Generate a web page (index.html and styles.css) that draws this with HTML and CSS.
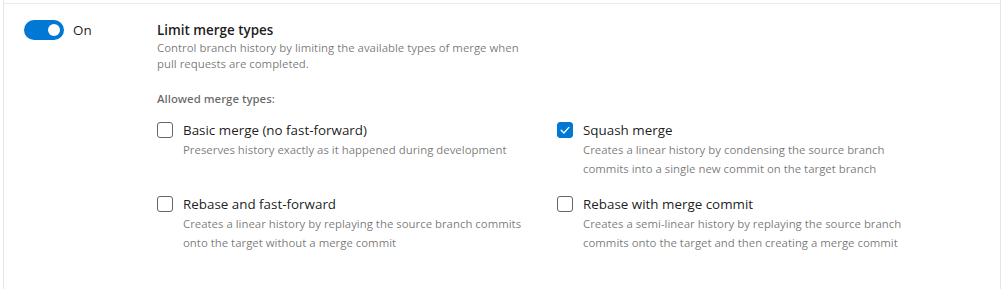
FILE: index.html
```html
<!DOCTYPE html>
<html lang="en">
<head>
<meta charset="utf-8">
<title>Limit merge types</title>
<link rel="stylesheet" href="styles.css">
</head>
<body>
<div class="page">
  <div class="setting">
    <div class="toggle-col">
      <span class="toggle" role="switch" aria-checked="true"><span class="knob"></span></span>
      <span class="toggle-label">On</span>
    </div>
    <div class="content">
      <div class="title">Limit merge types</div>
      <div class="desc">Control branch history by limiting the available types of merge when pull requests are completed.</div>
      <div class="allowed">Allowed merge types:</div>
      <div class="options">
        <div class="option">
          <span class="box"></span>
          <div class="option-text">
            <div class="option-label">Basic merge (no fast-forward)</div>
            <div class="option-desc">Preserves history exactly as it happened during development</div>
          </div>
        </div>
        <div class="option">
          <span class="box checked"><svg viewBox="0 0 16 16" width="16" height="16"><path d="M4.2 8.3 L6.9 11 L11.9 5.4" fill="none" stroke="#fff" stroke-width="1.3" stroke-linecap="round" stroke-linejoin="round"/></svg></span>
          <div class="option-text">
            <div class="option-label">Squash merge</div>
            <div class="option-desc">Creates a linear history by condensing the source branch commits into a single new commit on the target branch</div>
          </div>
        </div>
        <div class="option">
          <span class="box"></span>
          <div class="option-text">
            <div class="option-label">Rebase and fast-forward</div>
            <div class="option-desc">Creates a linear history by replaying the source branch commits onto the target without a merge commit</div>
          </div>
        </div>
        <div class="option">
          <span class="box"></span>
          <div class="option-text">
            <div class="option-label">Rebase with merge commit</div>
            <div class="option-desc">Creates a semi-linear history by replaying the source branch commits onto the target and then creating a merge commit</div>
          </div>
        </div>
      </div>
    </div>
  </div>
</div>
</body>
</html>
```
FILE: styles.css
```css
html, body {
  margin: 0;
  padding: 0;
  background: #fff;
}
body {
  font-family: "Open Sans", "Noto Sans", sans-serif;
  color: rgba(0, 0, 0, 0.9);
}
.page {
  margin-left: 3px;
  width: 998px;
  height: 289px;
  border-left: 1px solid #e6e6e6;
  border-right: 1px solid #e6e6e6;
  padding-top: 3px;
  box-sizing: border-box;
}
.setting {
  border-top: 1px solid #eaeaea;
  display: flex;
  padding: 16px 20px 0;
}
.toggle-col {
  width: 133px;
  flex: none;
  display: flex;
  align-items: center;
  gap: 9px;
  height: 20px;
}
.toggle {
  width: 40px;
  height: 20px;
  border-radius: 10px;
  background: #0078d4;
  display: flex;
  align-items: center;
  justify-content: flex-end;
  padding-right: 4px;
  box-sizing: border-box;
}
.knob {
  width: 12px;
  height: 12px;
  border-radius: 50%;
  background: #fff;
}
.toggle-label {
  font-size: 13.4px;
  line-height: 20px;
  color: rgba(0, 0, 0, 0.9);
}
.content {
  flex: 1;
}
.title {
  font-size: 13.4px;
  line-height: 20px;
  font-weight: 600;
}
.desc {
  font-size: 11.4px;
  line-height: 16px;
  color: rgba(0, 0, 0, 0.55);
  width: 375px;
}
.allowed {
  margin-top: 19px;
  font-size: 11.4px;
  line-height: 16px;
  font-weight: 600;
  color: rgba(0, 0, 0, 0.6);
}
.options {
  margin-top: 13px;
  display: grid;
  grid-template-columns: 400px 400px;
  row-gap: 16px;
}
.option {
  display: flex;
  gap: 10px;
}
.box {
  flex: none;
  width: 16px;
  height: 16px;
  margin-top: 2px;
  box-sizing: border-box;
  border: 1px solid #666;
  border-radius: 3px;
  display: flex;
}
.box.checked {
  background: #0078d4;
  border-color: #0078d4;
}
.box.checked svg {
  margin: -1px;
}
.option-label {
  font-size: 13.4px;
  line-height: 20px;
}
.option-desc {
  font-size: 11.4px;
  line-height: 19px;
  color: rgba(0, 0, 0, 0.55);
  max-width: 342px;
}
```
